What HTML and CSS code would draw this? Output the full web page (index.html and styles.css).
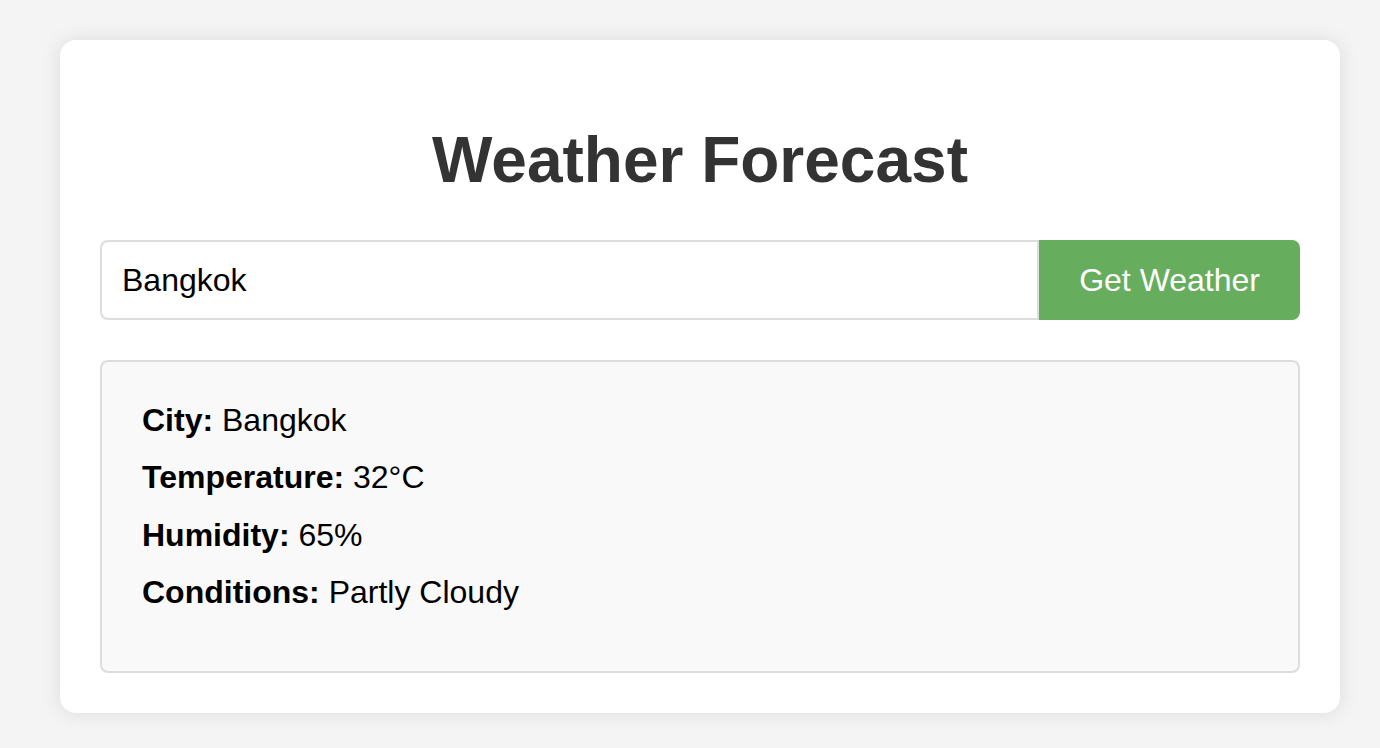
FILE: index.html
```html
<!DOCTYPE html>
<html lang="en">
<head>
<meta charset="utf-8">
<title>Weather Forecast</title>
<link rel="stylesheet" href="styles.css">
</head>
<body>
<main class="card">
  <h1 class="title">Weather Forecast</h1>
  <form class="search" onsubmit="return false">
    <input class="search-input" type="text" value="Bangkok">
    <button class="search-button" type="submit">Get Weather</button>
  </form>
  <section class="result">
    <p class="row"><strong>City:</strong> Bangkok</p>
    <p class="row"><strong>Temperature:</strong> 32°C</p>
    <p class="row"><strong>Humidity:</strong> 65%</p>
    <p class="row"><strong>Conditions:</strong> Partly Cloudy</p>
  </section>
</main>
</body>
</html>
```

FILE: styles.css
```css
html, body {
  margin: 0;
  padding: 0;
}

body {
  background: #f4f4f4;
  font-family: "Liberation Sans", Arial, sans-serif;
  color: #000;
  height: 748px;
  overflow: hidden;
}

.card {
  background: #fff;
  margin: 40px 40px 0 60px;
  padding: 40px;
  border-radius: 16px;
  box-shadow: 0 0 20px rgba(0, 0, 0, 0.1);
}

.title {
  margin: 43px 0;
  font-size: 64px;
  font-weight: bold;
  color: #333;
  text-align: center;
  line-height: normal;
}

.search {
  display: flex;
  margin: 0 0 40px;
}

.search-input {
  flex: 1;
  min-width: 0;
  height: 80px;
  box-sizing: border-box;
  padding: 0 20px;
  border: 2px solid #dddddd;
  border-radius: 8px 0 0 8px;
  font-family: "Liberation Sans", Arial, sans-serif;
  font-size: 32px;
  color: #000;
  background: #fff;
  outline: none;
}

.search-button {
  height: 80px;
  box-sizing: border-box;
  padding: 0 40px;
  border: none;
  border-radius: 0 8px 8px 0;
  background: #67ad5e;
  color: #fff;
  font-family: "Liberation Sans", Arial, sans-serif;
  font-size: 32px;
  cursor: pointer;
}

.result {
  background: #f9f9f9;
  border: 2px solid #dddddd;
  border-radius: 8px;
  padding: 20px 40px 40px;
}

.row {
  margin: 20px 0;
  font-size: 32px;
  line-height: 37.3px;
}
```
